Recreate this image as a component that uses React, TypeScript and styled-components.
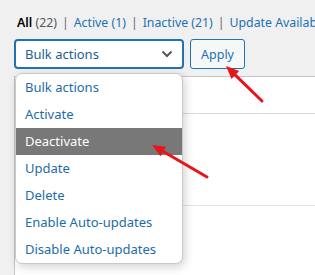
import styled, { createGlobalStyle } from "styled-components";

const GlobalStyle = createGlobalStyle`
    html, body {
        margin: 0;
        padding: 0;
        background: #f0f0f1;
        font-family: "Noto Sans", "Open Sans", sans-serif;
        overflow: hidden;
    }
`

const filters = [
    { label: "All", count: 22, current: true },
    { label: "Active", count: 1 },
    { label: "Inactive", count: 21 },
    { label: "Update Available", count: 1 },
]

const actions = [
    "Bulk actions",
    "Activate",
    "Deactivate",
    "Update",
    "Delete",
    "Enable Auto-updates",
    "Disable Auto-updates",
]

export default function App() {
    return (
        <Page>
            <GlobalStyle />
            <SubSubSub>
                {filters.map((f, i) => (
                    <li key={f.label}>
                        <FilterLink $current={f.current}>
                            {f.label} <Count>({f.count})</Count>
                        </FilterLink>
                        {i < filters.length - 1 && <Sep>|</Sep>}
                    </li>
                ))}
            </SubSubSub>

            <Toolbar>
                <SelectBox>
                    <span>Bulk actions</span>
                    <svg width="12" height="8" viewBox="0 0 12 8">
                        <path d="M1.5 1.5 L6 6 L10.5 1.5" fill="none" stroke="#50575e" strokeWidth="2" />
                    </svg>
                </SelectBox>
                <ApplyBtn>Apply</ApplyBtn>
            </Toolbar>

            <Table>
                <HeadRow />
                <BodyRow />
            </Table>

            {/* native select list, opened */}
            <Menu>
                {actions.map((a) => (
                    <Option key={a} $active={a === "Deactivate"}>{a}</Option>
                ))}
            </Menu>

            <Arrows width="315" height="275" viewBox="0 0 315 275">
                <Arrow x1={262} y1={101} x2={226} y2={66} />
                <Arrow x1={207} y1={177} x2={152} y2={145} />
            </Arrows>
        </Page>
    )
}

function Arrow({ x1, y1, x2, y2 }: { x1: number, y1: number, x2: number, y2: number }) {
    const ang = Math.atan2(y2 - y1, x2 - x1);
    const len = 13, w = 5.5;
    const bx = x2 - len * Math.cos(ang), by = y2 - len * Math.sin(ang);
    const px = -Math.sin(ang) * w, py = Math.cos(ang) * w;
    return (
        <g>
            <line x1={x1} y1={y1} x2={bx} y2={by} stroke="#e8141b" strokeWidth="3" strokeLinecap="round" />
            <polygon points={`${x2},${y2} ${bx + px},${by + py} ${bx - px},${by - py}`} fill="#e8141b" />
        </g>
    )
}

// styled components
const Page = styled.div`
    position: relative;
    width: 315px;
    height: 275px;
    overflow: hidden;
`

const SubSubSub = styled.ul`
    list-style: none;
    margin: 0;
    padding: 13px 0 0 17px;
    display: flex;
    white-space: nowrap;
    font-size: 12.3px;
    line-height: 20px;
    li { display: flex; }
`

const FilterLink = styled.a<{ $current?: boolean }>`
    color: ${p => p.$current ? "#000" : "#2271b1"};
    font-weight: ${p => p.$current ? 600 : 400};
    span { font-weight: 400; color: ${p => p.$current ? "#50575e" : "#2271b1"}; }
`

const Count = styled.span``

const Sep = styled.span`
    color: #646970;
    padding: 0 5px;
`

const Toolbar = styled.div`
    display: flex;
    gap: 6px;
    margin: 6px 0 0 14px;
`

const SelectBox = styled.div`
    box-sizing: border-box;
    width: 170px;
    height: 30px;
    border: 2px solid #2271b1;
    border-radius: 4px;
    background: #fff;
    display: flex;
    align-items: center;
    justify-content: space-between;
    padding: 0 9px 0 9px;
    font-size: 13px;
    color: #2c3338;
    span { color: #1d5f8f; }
`

const ApplyBtn = styled.button`
    box-sizing: border-box;
    width: 55px;
    height: 30px;
    border: 1px solid #2271b1;
    border-radius: 3px;
    background: #f6f7f7;
    color: #2271b1;
    font-family: inherit;
    font-size: 12.5px;
    padding: 0;
`

const Table = styled.div`
    margin: 7px 0 0 14px;
    background: #fff;
    border: 1px solid #c3c4c7;
    border-right: 0;
    height: 300px;
`

const HeadRow = styled.div`
    height: 36px;
    border-bottom: 1px solid #dcdcde;
`

const BodyRow = styled.div`
    height: 91px;
    border-bottom: 1px solid #e4e4e6;
`

const Menu = styled.div`
    position: absolute;
    left: 15px;
    top: 73px;
    width: 168px;
    box-sizing: border-box;
    background: #fff;
    border: 1px solid #c8c8c8;
    border-radius: 7px;
    box-shadow: 2px 3px 10px rgba(0, 0, 0, 0.18);
    overflow: hidden;
`

const Option = styled.div<{ $active?: boolean }>`
    height: 27px;
    line-height: 27px;
    padding-left: 9px;
    font-size: 13px;
    white-space: nowrap;
    color: ${p => p.$active ? "#fff" : "#1d6ca6"};
    background: ${p => p.$active ? "#787878" : "transparent"};
`

const Arrows = styled.svg`
    position: absolute;
    left: 0;
    top: 0;
    pointer-events: none;
`
